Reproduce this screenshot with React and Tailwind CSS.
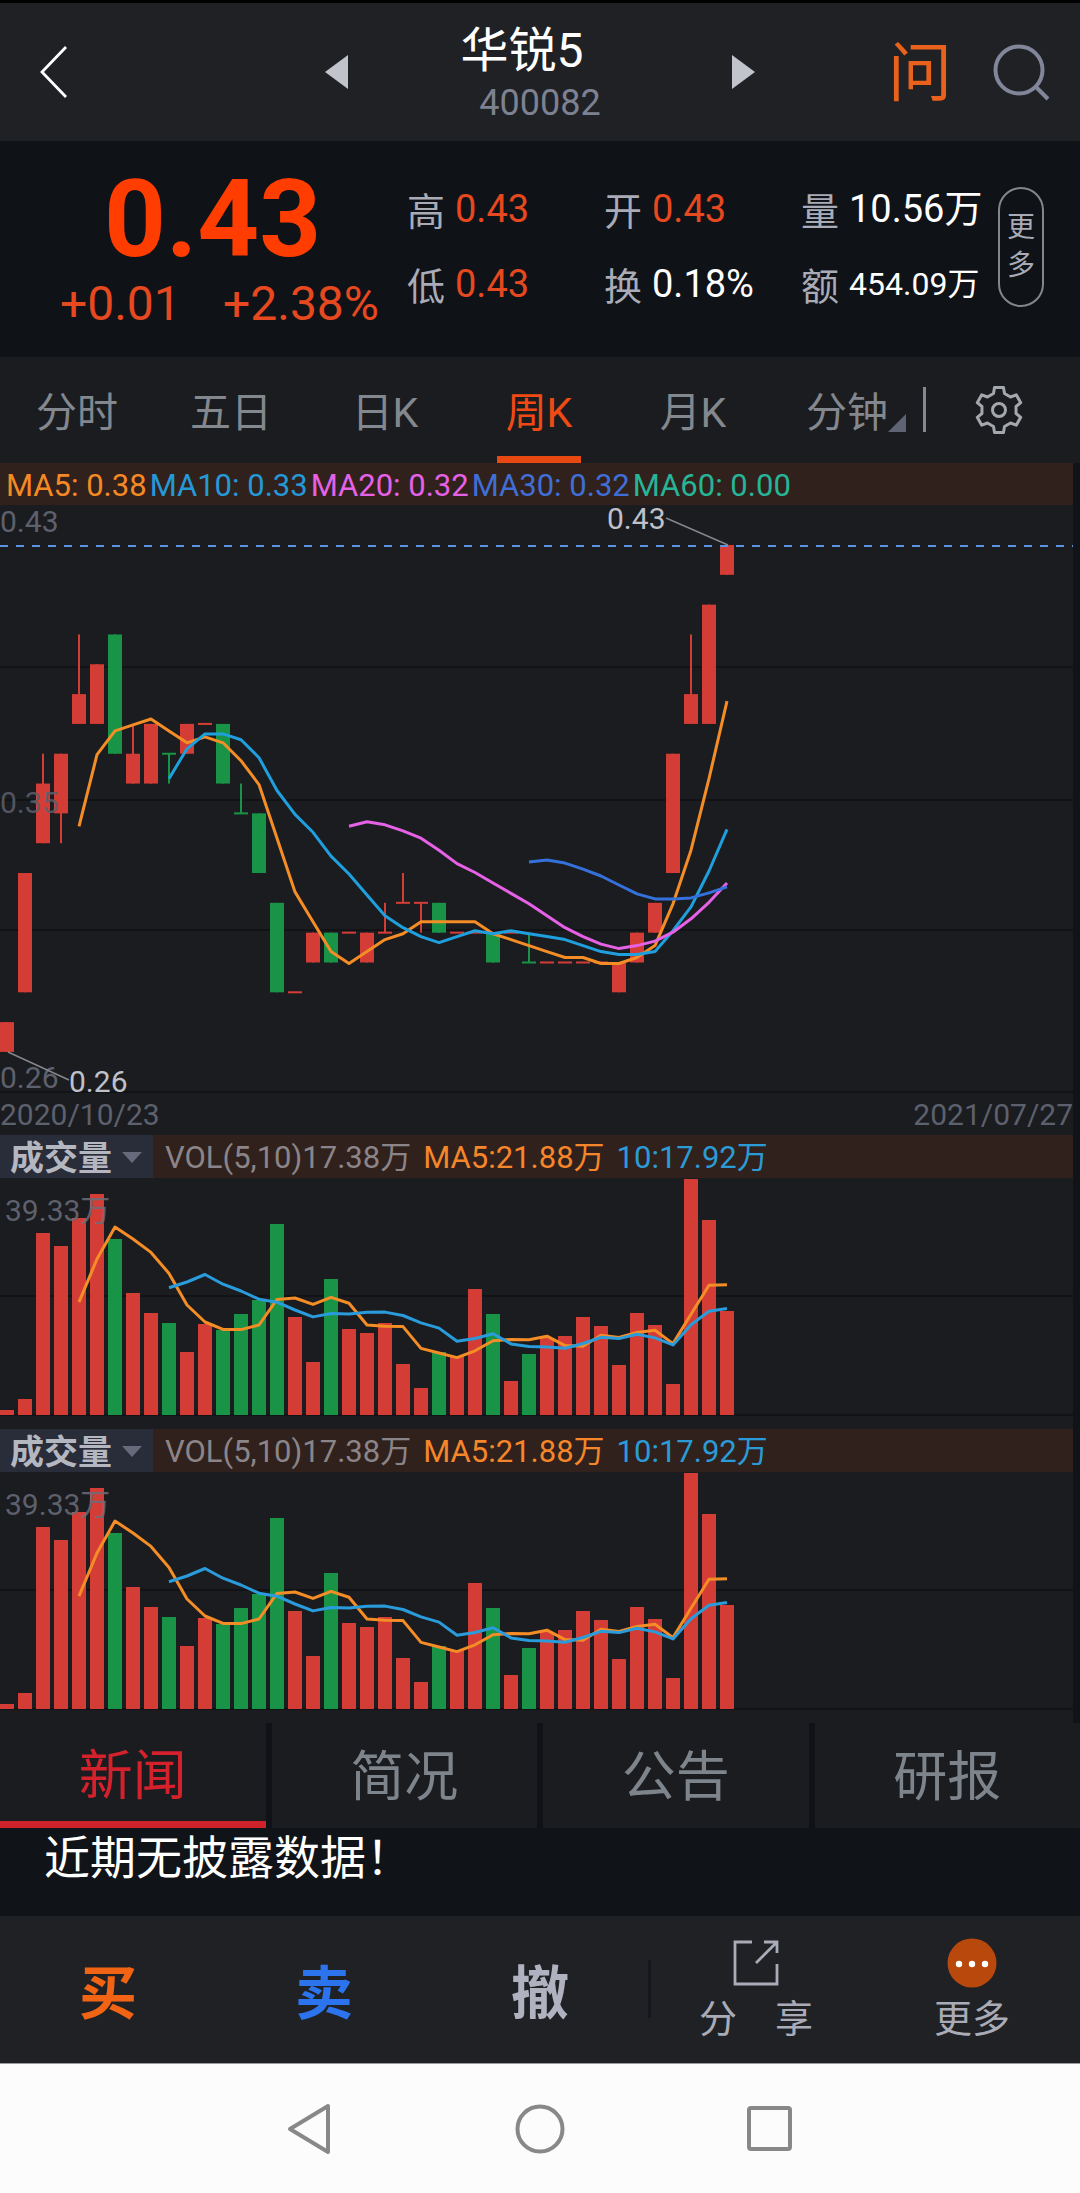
import React from "react";

const RED = "#d43d35";
const GREEN = "#199447";

// [open, close, high, low, direction] in cents; direction 1 = up, 0 = down
const CANDLES = [
  [26, 27, 27, 26, 1], [28, 32, 32, 28, 1], [33, 35, 36, 33, 1], [34, 36, 36, 33, 1],
  [37, 38, 40, 37, 1], [37, 39, 39, 37, 1], [40, 36, 40, 36, 0], [35, 36, 37, 35, 1],
  [35, 37, 37, 35, 1], [36, 36, 36, 35, 0], [36, 37, 37, 36, 1], [37, 37, 37, 37, 1],
  [37, 35, 37, 35, 0], [34, 34, 35, 34, 0], [34, 32, 34, 32, 0], [31, 28, 31, 28, 0],
  [28, 28, 28, 28, 1], [29, 30, 30, 29, 1], [30, 29, 30, 29, 0], [30, 30, 30, 30, 1],
  [29, 30, 30, 29, 1], [30, 30, 31, 30, 1], [31, 31, 32, 31, 1], [31, 31, 31, 30, 1],
  [31, 30, 31, 30, 0], [30, 30, 30, 30, 1], [30, 30, 30, 30, 1], [30, 29, 30, 29, 0],
  [30, 30, 30, 30, 1], [29, 29, 30, 29, 0], [29, 29, 29, 29, 1], [29, 29, 29, 29, 1],
  [29, 29, 29, 29, 1], [29, 29, 29, 29, 1], [28, 29, 29, 28, 1], [29, 30, 30, 29, 1],
  [30, 31, 31, 30, 1], [32, 36, 36, 32, 1], [37, 38, 40, 37, 1], [37, 41, 41, 37, 1],
  [42, 43, 43, 42, 1],
];

const VOLUMES = [
  5, 16, 182, 169, 197, 221, 176, 122, 102, 92, 63, 91, 85, 101, 115, 191, 98, 53, 136, 86, 82,
  92, 51, 27, 63, 59, 126, 101, 34, 61, 77, 79, 98, 89, 50, 102, 90, 31, 236, 195, 104,
];

const PITCH = 18;
const BAR = 14;
const priceY = (cents) => 40 + (43 - cents) * 29.82;
const volumeY = (v) => 237 - v;

function averageLine(values, n, toY) {
  const points = [];
  for (let i = n - 1; i < values.length; i++) {
    let sum = 0;
    for (let j = i - n + 1; j <= i; j++) sum += values[j];
    points.push(`${i * PITCH + BAR / 2},${(toY(sum / n) + 1).toFixed(1)}`);
  }
  return points.join(" ");
}

function Line({ values, n, toY, color }) {
  return (
    <polyline
      points={averageLine(values, n, toY)}
      fill="none"
      stroke={color}
      strokeWidth="3"
      strokeLinejoin="round"
    />
  );
}

function Grid({ rows, width = 1073 }) {
  return rows.map((y) => <path key={y} d={`M0 ${y}H${width}`} stroke="#111317" strokeWidth="2" />);
}

function PriceChart() {
  const closes = CANDLES.map((c) => c[1]);
  return (
    <svg viewBox="0 0 1073 588" className="block w-full overflow-visible" role="img" aria-label="周K">
      <Grid rows={[162, 295, 425, 587]} />
      {CANDLES.map(([open, close, high, low, up], i) => {
        const color = up ? RED : GREEN;
        const x = i * PITCH;
        const top = priceY(Math.max(open, close));
        const height = priceY(Math.min(open, close)) - top;
        return (
          <g key={i} fill={color}>
            {high !== low && <rect x={x + 6} y={priceY(high)} width="2" height={priceY(low) - priceY(high)} />}
            <rect x={x} y={height ? top : top - 1} width={BAR} height={height || 2} />
          </g>
        );
      })}
      <path d="M0 41H1073" stroke="#5b93e0" strokeWidth="2" strokeDasharray="8 8" />
      <g fontSize="30" fill="#5d606d">
        <text x="0" y="27">0.43</text>
        <text x="0" y="308" fillOpacity="0.85">0.35</text>
        <text x="0" y="583">0.26</text>
      </g>
      <Line values={closes} n={5} toY={priceY} color="#f58d26" />
      <Line values={closes} n={10} toY={priceY} color="#1f9fdd" />
      <Line values={closes} n={20} toY={priceY} color="#e561e6" />
      <Line values={closes} n={30} toY={priceY} color="#3571db" />
      <path d="M8 547L69 575M666 13L728 40" stroke="#85878d" strokeWidth="1.400" />
      <g fontSize="30" fill="#bfc1c9">
        <text x="69" y="587">0.26</text>
        <text x="607" y="24">0.43</text>
      </g>
    </svg>
  );
}

function VolumePanel() {
  return (
    <section>
      <div className="flex h-[43px] items-center gap-3 bg-[#30211c] text-[31px] leading-none whitespace-nowrap">
        <button className="flex h-full w-[153px] items-center gap-2.5 bg-[#292c39] pt-0.5 pl-2.5 text-[34px] font-bold text-[#b5b7c0]">
          成交量
          <svg width="20" height="12" viewBox="0 0 20 12"><path d="M0 0H20L10 11Z" fill="#666a7a" /></svg>
        </button>
        <span className="pt-0.5 text-[#8b8589]">VOL(5,10)17.38万</span>
        <span className="pt-0.5 text-[#f5862a]">MA5:21.88万</span>
        <span className="pt-0.5 text-[#2b9bd7]">10:17.92万</span>
      </div>
      <svg viewBox="0 0 1073 251" className="block w-full" role="img" aria-label="成交量">
        <Grid rows={[118, 237]} />
        {VOLUMES.map((v, i) => (
          <rect key={i} x={i * PITCH} y={volumeY(v)} width={BAR} height={v} fill={CANDLES[i][4] ? RED : GREEN} />
        ))}
        <text x="5" y="43" fontSize="30" fill="#6b6d7a" fillOpacity="0.85">39.33万</text>
        <Line values={VOLUMES} n={5} toY={volumeY} color="#f58d26" />
        <Line values={VOLUMES} n={10} toY={volumeY} color="#2a9bdb" />
      </svg>
    </section>
  );
}

function Header() {
  return (
    <header className="grid h-[141px] grid-cols-[1fr_430px_1fr] items-center border-t-3 border-black bg-[#202125]">
      <button aria-label="返回" className="ml-10 w-fit">
        <svg width="30" height="52" viewBox="0 0 30 52">
          <path d="M26 1L2 26L26 51" fill="none" stroke="#fff" strokeWidth="2.800" />
        </svg>
      </button>
      <div className="flex items-center justify-between">
        <button aria-label="上一只">
          <svg width="23" height="34" viewBox="0 0 23 34"><path d="M23 0V34L0 17Z" fill="#c2c4cb" /></svg>
        </button>
        <div className="pt-2 text-center">
          <h1 className="pr-9 text-[48px] leading-[54px] text-white">华锐5</h1>
          <p className="text-[36px] leading-[50px] text-[#7d8191]">400082</p>
        </div>
        <button aria-label="下一只">
          <svg width="23" height="34" viewBox="0 0 23 34"><path d="M0 0V34L23 17Z" fill="#c2c4cb" /></svg>
        </button>
      </div>
      <div className="flex items-center justify-end gap-10 pr-[30px]">
        <button className="pt-1 text-[64px] leading-none text-[#e8621c]">问</button>
        <button aria-label="搜索">
          <svg width="58" height="58" viewBox="0 0 58 58" fill="none" stroke="#81869a" strokeWidth="4">
            <circle cx="27" cy="27" r="23.500" />
            <path d="M43 43L56 56" />
          </svg>
        </button>
      </div>
    </header>
  );
}

function Stat({ label, value, tone = "text-white", size = "text-[38px]" }) {
  return (
    <div className="flex items-center gap-2.5 whitespace-nowrap">
      <dt className="pt-1.5 text-[38px] leading-[44px] text-[#a9abb6]">{label}</dt>
      <dd className={`leading-[44px] ${size} ${tone}`}>{value}</dd>
    </div>
  );
}

function Quote() {
  const hot = "text-[#e6481f]";
  return (
    <section className="flex h-[216px] items-center bg-[#0f1217] pr-9">
      <div className="w-[407px] shrink-0 text-[#e6481f]">
        <p className="pl-[104px] text-[108px] leading-[110px] font-bold text-[#ff3d00]">0.43</p>
        <p className="flex justify-between pr-7 pl-15 text-[48px] leading-[60px]">
          <span>+0.01</span>
          <span>+2.38%</span>
        </p>
      </div>
      <dl className="grid flex-1 grid-cols-[1fr_1fr_1fr] gap-y-[25px] pb-1.5">
        <Stat label="高" value="0.43" tone={hot} />
        <Stat label="开" value="0.43" tone={hot} />
        <Stat label="量" value="10.56万" />
        <Stat label="低" value="0.43" tone={hot} />
        <Stat label="换" value="0.18%" />
        <Stat label="额" value="454.09万" size="text-[32px]" />
      </dl>
      <button className="mb-1 flex h-[120px] w-[46px] shrink-0 flex-col items-center justify-center rounded-full border-2 border-[#85868a] text-[28px] leading-[38px] text-[#a9abb6]">
        <span>更</span>
        <span>多</span>
      </button>
    </section>
  );
}

function Gear() {
  const turns = [0, 60, 120, 180, 240, 300];
  const tooth = [[-5.5, -16.5], [-4.5, -22.5], [4.5, -22.5], [5.5, -16.5]];
  const points = turns.flatMap((deg) => {
    const a = (deg * Math.PI) / 180;
    return tooth.map(([x, y]) => {
      const px = 24 + x * Math.cos(a) - y * Math.sin(a);
      const py = 24 + x * Math.sin(a) + y * Math.cos(a);
      return `${px.toFixed(2)},${py.toFixed(2)}`;
    });
  });
  return (
    <svg width="48" height="48" viewBox="0 0 48 48" fill="none" stroke="#a5a7ae" strokeWidth="3" strokeLinejoin="round">
      <polygon points={points.join(" ")} />
      <circle cx="24" cy="24" r="6.500" />
    </svg>
  );
}

function PeriodTabs() {
  return (
    <nav className="grid h-[106px] grid-cols-7 bg-[#1b1c20] pr-0.5 text-[41px] leading-none text-[#83878e]">
      {["分时", "五日", "日K"].map((t) => <button key={t} className="pt-1.5">{t}</button>)}
      <button className="relative pt-1.5 text-[#f04a14]">
        周K
        <span className="absolute inset-x-[35px] bottom-0 h-[7px] bg-[#e84912]" />
      </button>
      <button className="pt-1.5">月K</button>
      <button className="relative pt-1.5">
        分钟
        <svg className="absolute right-[18px] bottom-[31px]" width="18" height="18" viewBox="0 0 18 18">
          <path d="M18 0V18H0Z" fill="#5f6474" />
        </svg>
        <span className="absolute -right-0.5 bottom-[31px] h-[45px] w-[3px] bg-[#85888e]" />
      </button>
      <button aria-label="设置" className="flex items-center justify-center pr-1">
        <Gear />
      </button>
    </nav>
  );
}

const AVERAGES = [
  ["MA5: 0.38", "text-[#f58a24]"],
  ["MA10: 0.33", "text-[#2599d8]"],
  ["MA20: 0.32", "text-[#e561e6]"],
  ["MA30: 0.32", "text-[#3f6fd6]"],
  ["MA60: 0.00", "text-[#27b597]"],
];

function NewsTabs() {
  return (
    <nav className="grid h-[105px] grid-cols-4 gap-x-1.5 bg-[#101217] text-[54px] leading-none text-[#7e848b]">
      <button className="border-b-7 border-[#d0222b] bg-[#1b1c20] pt-2.5 text-[#d4212c]">新闻</button>
      {["简况", "公告", "研报"].map((t) => (
        <button key={t} className="bg-[#1b1c20] pt-1">{t}</button>
      ))}
    </nav>
  );
}

function ActionBar() {
  return (
    <nav className="grid h-[147px] grid-cols-5 bg-[#202125] text-[#a9abb6]">
      <button className="pt-2.5 text-[58px] font-bold text-[#f06414]">买</button>
      <button className="pt-2.5 text-[58px] font-bold text-[#2b74ee]">卖</button>
      <button className="pt-2.5 text-[58px] font-bold text-[#b0b2bf]">撤</button>
      <button className="relative flex flex-col items-center pt-5 text-[38px] leading-[58px]">
        <span className="absolute top-11 left-0 h-[58px] w-[3px] bg-[#15171c]" />
        <svg width="50" height="54" viewBox="0 0 50 54" fill="none" stroke="#a9abb6" strokeWidth="2.800">
          <path d="M21 6H4V48H46V28M33 6H46V17M45 7L25 27" />
        </svg>
        分　享
      </button>
      <button className="flex flex-col items-center pt-5 text-[38px] leading-[58px]">
        <svg width="50" height="54" viewBox="0 0 50 54">
          <circle cx="25" cy="27" r="24.500" fill="#b8480c" />
          <g fill="#fff"><circle cx="12" cy="28" r="3.200" /><circle cx="25" cy="28" r="3.200" /><circle cx="38" cy="28" r="3.200" /></g>
        </svg>
        更多
      </button>
    </nav>
  );
}

function SystemBar() {
  const stroke = { fill: "none", stroke: "#888", strokeWidth: 4, strokeLinejoin: "round" };
  return (
    <footer className="flex h-[130px] items-center justify-center gap-45 border-t border-[#9a9a9c] bg-[#fcfcfc]">
      <button aria-label="后退">
        <svg width="50" height="54" viewBox="0 0 50 54" {...stroke}><path d="M43 4V50L5 27Z" /></svg>
      </button>
      <button aria-label="主页">
        <svg width="50" height="54" viewBox="0 0 50 54" {...stroke}><circle cx="25" cy="27" r="22.500" /></svg>
      </button>
      <button aria-label="最近任务">
        <svg width="50" height="54" viewBox="0 0 50 54" {...stroke}><rect x="4" y="6" width="41" height="41" rx="2" /></svg>
      </button>
    </footer>
  );
}

export default function App() {
  return (
    <div className="w-full bg-[#101318] font-[Roboto,'Noto_Sans_CJK_SC',sans-serif]">
      <Header />
      <Quote />
      <PeriodTabs />
      <main className="mr-[7px] bg-[#1b1c20]">
        <div className="flex h-[42px] items-center gap-[3px] bg-[#30211c] pt-0.5 pl-1.5 text-[31px] leading-none whitespace-nowrap">
          {AVERAGES.map(([text, tone]) => <span key={text} className={tone}>{text}</span>)}
        </div>
        <PriceChart />
        <div className="flex h-[42px] items-center justify-between pt-0.5 text-[30px] leading-none text-[#5d606d]">
          <time>2020/10/23</time>
          <time>2021/07/27</time>
        </div>
        <VolumePanel />
        <VolumePanel />
      </main>
      <NewsTabs />
      <p className="h-[88px] pl-11 text-[46px] leading-[60px] text-white">近期无披露数据！</p>
      <ActionBar />
      <SystemBar />
    </div>
  );
}
